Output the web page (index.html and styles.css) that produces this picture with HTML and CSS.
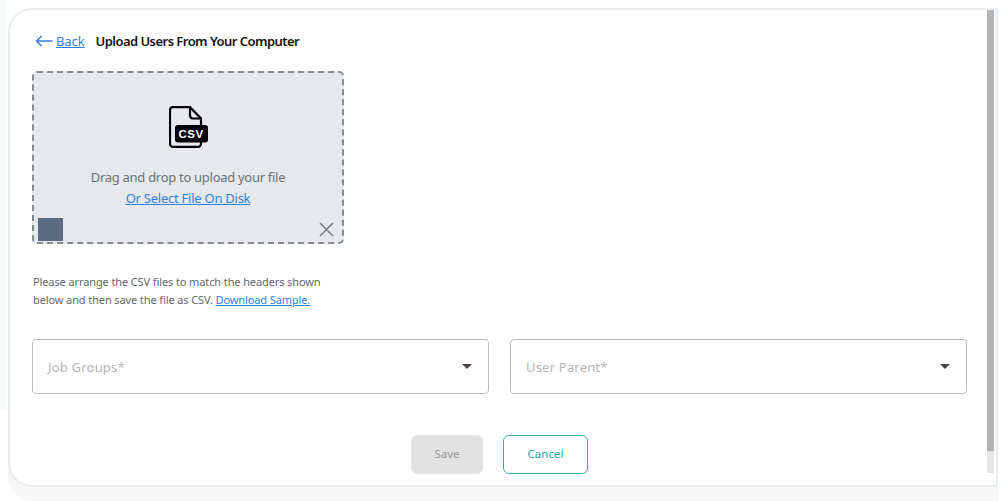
FILE: index.html
```html
<!DOCTYPE html>
<html lang="en">
<head>
    <meta charset="UTF-8">
    <meta name="viewport" content="width=device-width, initial-scale=1.0">
    <title>Upload Users From Your Computer</title>
    <link rel="stylesheet" href="styles.css">
</head>
<body>

    <div class="card">
        <div class="content">
            <!-- Back link and title -->
            <div class="title-row">
                <a class="back" href="#">
                    <svg class="back-arrow" width="18" height="12" viewBox="0 0 18 12" fill="none" stroke="#2f80dc" stroke-width="1.6">
                        <path d="M17.5 6H1.5M6.5 1L1.5 6l5 5"/>
                    </svg>
                    <span>Back</span>
                </a>
                <h1>Upload Users From Your Computer</h1>
            </div>

            <!-- Upload area -->
            <div class="dropzone">
                <svg class="csv-icon" width="40" height="42" viewBox="0 0 40 42">
                    <path d="M21 1.200H4a3 3 0 0 0-3 3v33.600a3 3 0 0 0 3 3h25a3 3 0 0 0 3-3V12.500z" fill="none" stroke="#000" stroke-width="2.200"/>
                    <path d="M21 1.200v8.300a3 3 0 0 0 3 3h8" fill="none" stroke="#000" stroke-width="2.200"/>
                    <rect x="6" y="19" width="33" height="17.500" rx="3" fill="#000"/>
                    <text class="csv-label" x="22" y="32">CSV</text>
                </svg>
                <p class="drop-text">Drag and drop to upload your file</p>
                <a class="select-link" href="#">Or Select File On Disk</a>
                <span class="thumb"></span>
                <svg class="remove" width="15" height="15" viewBox="0 0 15 15" stroke="#7b8087" stroke-width="1.600">
                    <path d="M1 1l13 13M14 1L1 14"/>
                </svg>
            </div>

            <p class="help">Please arrange the CSV files to match the headers shown<br>below and then save the file as CSV. <a href="#">Download Sample.</a></p>

            <!-- Dropdowns -->
            <div class="fields">
                <div class="select">
                    <span>Job Groups*</span>
                    <i class="caret"></i>
                </div>
                <div class="select">
                    <span>User Parent*</span>
                    <i class="caret"></i>
                </div>
            </div>

            <div class="actions">
                <button class="btn btn-save" type="button">Save</button>
                <button class="btn btn-cancel" type="button">Cancel</button>
            </div>
        </div>

        <div class="scrollbar">
            <div class="scrollbar-thumb"></div>
        </div>
    </div>

</body>
</html>
```

FILE: styles.css
```css
html,
body {
    height: 100%;
}

body {
    margin: 0;
    overflow: hidden;
    font-family: "Noto Sans", Arial, sans-serif;
    color: #000;
    background: linear-gradient(#f5fbfa, #f5fbfa) no-repeat 0 0 / 6px 410px, #fff;
}

.card {
    display: flex;
    box-sizing: border-box;
    width: 990px;
    height: 479px;
    margin: 8px 0 0 8px;
    background-color: #fff;
    border: 2px solid #e8edf1;
    border-radius: 24px 0 0 24px;
    box-shadow: 0 14px 0 #f7f7f7;
}

.content {
    flex: 1;
    padding: 0 0 0 22px;
}

.title-row {
    display: flex;
    align-items: center;
    height: 61px;
}

.back {
    display: flex;
    align-items: center;
    gap: 3px;
    margin-left: 3px;
    font-size: 13px;
    letter-spacing: -0.1px;
    color: #2f80dc;
}

.back span {
    text-decoration: underline;
}

h1 {
    margin: 0 0 0 11px;
    font-size: 13px;
    font-weight: 600;
    letter-spacing: -0.54px;
    color: #111;
}

.dropzone {
    position: relative;
    box-sizing: border-box;
    display: flex;
    flex-direction: column;
    align-items: center;
    width: 312px;
    height: 173px;
    padding-top: 33px;
    background-color: #e6e8ec;
    border: 2px dashed #858b93;
    border-radius: 5px;
}

.csv-icon {
    margin-left: 1px;
}

.csv-label {
    font-family: "Liberation Sans", Arial, sans-serif;
    font-size: 11.500px;
    font-weight: 700;
    letter-spacing: 0.5px;
    text-anchor: middle;
    fill: #fff;
}

.drop-text {
    margin: 19px 0 0;
    font-size: 13px;
    line-height: 20px;
    letter-spacing: -0.29px;
    color: #6d7278;
}

.select-link {
    margin-top: 1px;
    font-size: 13px;
    line-height: 20px;
    letter-spacing: -0.25px;
    color: #2f80dc;
}

.thumb {
    position: absolute;
    left: 4px;
    bottom: 1px;
    width: 25px;
    height: 23px;
    background-color: #5d6b82;
}

.remove {
    position: absolute;
    right: 8px;
    bottom: 5px;
}

.help {
    margin: 29px 0 0 1px;
    font-size: 11px;
    line-height: 18px;
    letter-spacing: -0.11px;
    color: #63676c;
}

.help a {
    color: #2f80dc;
}

.fields {
    display: flex;
    gap: 21px;
    width: 935px;
    margin-top: 30px;
}

.select {
    flex: 1;
    display: flex;
    align-items: center;
    justify-content: space-between;
    box-sizing: border-box;
    height: 55px;
    padding: 0 16px 0 15px;
    border: 1px solid #bdbdbd;
    border-radius: 4px;
    font-size: 13px;
    letter-spacing: 0.2px;
    color: #b4b4b4;
}

.caret {
    width: 0;
    height: 0;
    border-left: 5px solid transparent;
    border-right: 5px solid transparent;
    border-top: 5px solid #4a4346;
}

.actions {
    display: flex;
    justify-content: center;
    gap: 20px;
    width: 935px;
    margin-top: 41px;
}

.btn {
    box-sizing: border-box;
    height: 39px;
    padding-bottom: 4px;
    border-radius: 6px;
    font-family: inherit;
    font-size: 11.500px;
}

.btn-save {
    width: 72px;
    color: #9b9b9b;
    background-color: #e2e2e2;
    border: 1px solid #e6e6e6;
}

.btn-cancel {
    width: 85px;
    color: #25a99a;
    background-color: #fff;
    border: 1px solid #39ac9f;
}

.scrollbar {
    display: flex;
    flex-direction: column;
    flex-shrink: 0;
    width: 7px;
    height: 463px;
    margin-right: 2px;
    background-color: #e6e6e6;
}

.scrollbar-thumb {
    height: 441px;
    background-color: #b3b3b3;
}
```
